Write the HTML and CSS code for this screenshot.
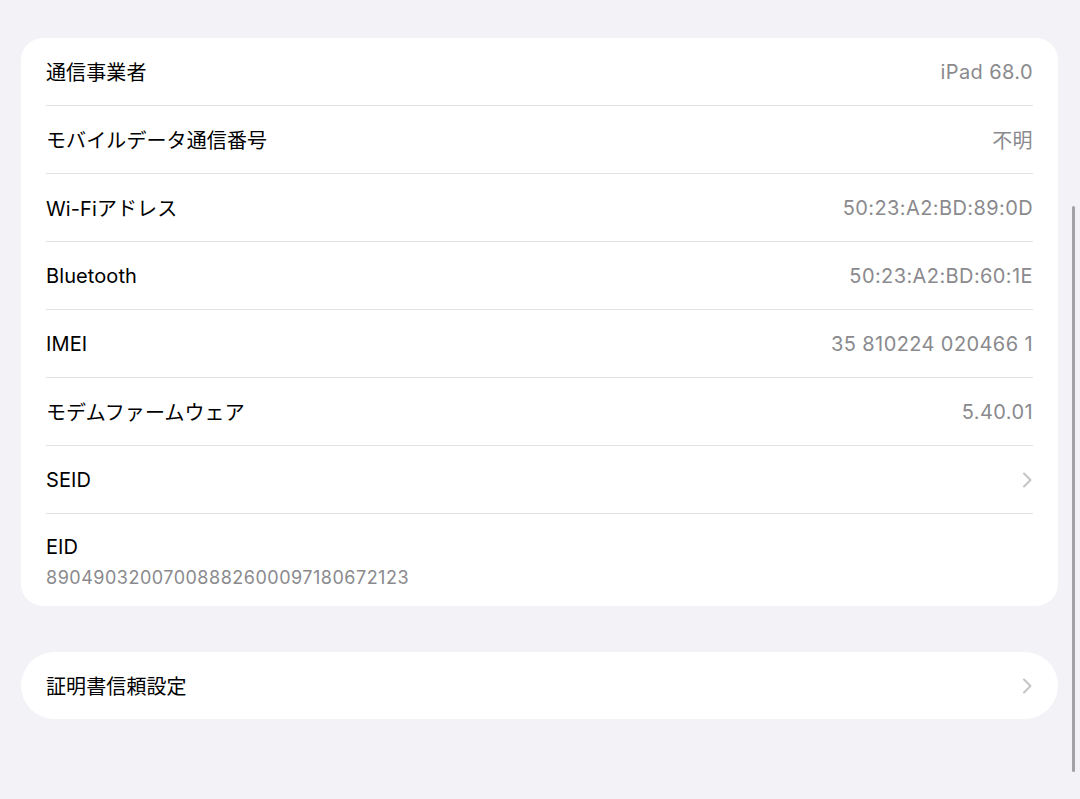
FILE: index.html
```html
<!DOCTYPE html>
<html lang="ja">
<head>
<meta charset="utf-8">
<link rel="stylesheet" href="styles.css">
</head>
<body>
<div class="page">
  <div class="card">
    <div class="row"><span class="label">通信事業者</span><span class="value">iPad 68.0</span></div>
    <div class="row"><span class="label">モバイルデータ通信番号</span><span class="value">不明</span></div>
    <div class="row"><span class="label">Wi-Fiアドレス</span><span class="value">50:23:A2:BD:89:0D</span></div>
    <div class="row"><span class="label">Bluetooth</span><span class="value">50:23:A2:BD:60:1E</span></div>
    <div class="row"><span class="label">IMEI</span><span class="value">35 810224 020466 1</span></div>
    <div class="row"><span class="label">モデムファームウェア</span><span class="value">5.40.01</span></div>
    <div class="row"><span class="label">SEID</span>
      <svg class="chev" width="10" height="16" viewBox="0 0 10 16"><path d="M2 1.5 L8.5 8 L2 14.5" fill="none" stroke="#c4c4c7" stroke-width="2" stroke-linecap="round" stroke-linejoin="round"/></svg>
    </div>
    <div class="row tall">
      <span class="label">EID</span>
      <span class="sub">89049032007008882600097180672123</span>
    </div>
  </div>
  <div class="card pill">
    <div class="row"><span class="label">証明書信頼設定</span>
      <svg class="chev" width="10" height="16" viewBox="0 0 10 16"><path d="M2 1.5 L8.5 8 L2 14.5" fill="none" stroke="#c4c4c7" stroke-width="2" stroke-linecap="round" stroke-linejoin="round"/></svg>
    </div>
  </div>
</div>
<div class="scrollbar"></div>
</body>
</html>
```
FILE: styles.css
```css
html, body {
  margin: 0;
  padding: 0;
  background: #f2f2f7;
  height: 799px;
  overflow: hidden;
}
body {
  font-family: Inter, "Noto Sans CJK JP", "Noto Sans", sans-serif;
  color: #000;
}
.page {
  padding: 38px 22px 0 21px;
  display: flex;
  flex-direction: column;
  gap: 46px;
}
.card {
  background: #fff;
  border-radius: 22px;
  display: flex;
  flex-direction: column;
}
.card.pill {
  border-radius: 34px;
}
.row {
  margin: 0 25px;
  height: 67px;
  border-bottom: 1px solid #e3e3e6;
  display: flex;
  align-items: center;
  justify-content: space-between;
  font-size: 20px;
}
.row:last-child {
  border-bottom: none;
}
.row.tall {
  height: 92px;
  flex-direction: column;
  align-items: flex-start;
  justify-content: center;
  gap: 8px;
  padding-top: 3px;
  box-sizing: border-box;
}
.label {
  letter-spacing: 0.1px;
}
.value {
  color: #8a8a8e;
  letter-spacing: 0.4px;
}
.sub {
  color: #8a8a8e;
  font-size: 18px;
  letter-spacing: 0.5px;
}
.chev {
  margin-right: 1px;
}
.scrollbar {
  position: absolute;
  right: 5px;
  top: 206px;
  width: 3px;
  height: 566px;
  border-radius: 2px;
  background: #a1a1a6;
}
```
